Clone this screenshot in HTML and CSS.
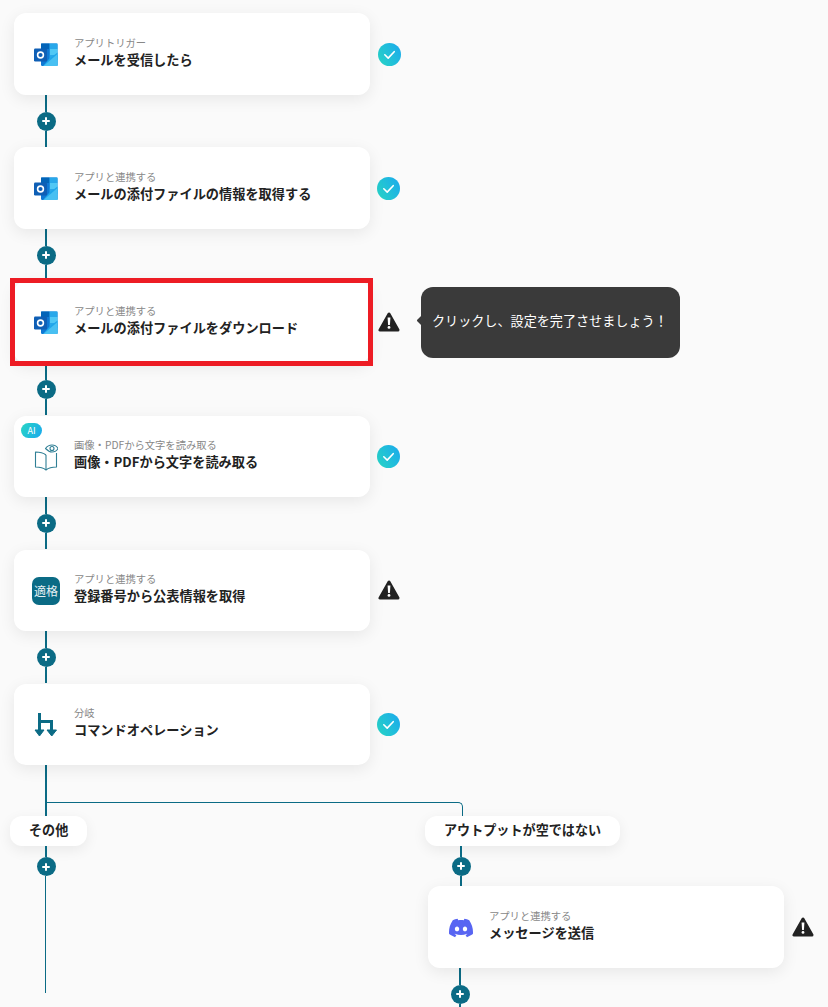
FILE: index.html
```html
<!DOCTYPE html>
<html lang="ja">

<head>
    <meta charset="UTF-8">
    <meta name="viewport" content="width=device-width, initial-scale=1.0">
    <title>フローボット</title>
    <link rel="stylesheet" href="styles.css">
</head>

<body>
    <svg class="defs" width="0" height="0">
        <symbol id="outlook" viewBox="0 0 24 24">
            <rect x="7" y="0.5" width="16.5" height="22.500" rx="1.2" fill="#0f78d4" />
            <path d="M7 .5h8.500V6H7z" fill="#0364b8" />
            <path d="M15.500 .5h8V6h-8z" fill="#28a8ea" />
            <path d="M15.500 6h8v6h-8z" fill="#50c8f5" />
            <path d="M7 6h8.500v6H7z" fill="#0f78d4" />
            <path d="M15.500 12h8v5h-8z" fill="#28a8ea" />
            <path d="M23.500 9.500V22a1 1 0 01-1 1H9l6-7z" fill="#1ea5ea" />
            <path d="M23.500 11v12H9.500z" fill="#48c0f2" />
            <rect x="0" y="5.500" width="13" height="13" rx="1.200" fill="#0f5fb5" />
            <circle cx="6.500" cy="12" r="2.900" fill="none" stroke="#fff" stroke-width="1.600" />
        </symbol>
        <symbol id="check" viewBox="0 0 23 23">
            <path d="M6.800 11.800l3.400 3.300 6-6.400" fill="none" stroke="#fff" stroke-width="1.600" stroke-linecap="round" stroke-linejoin="round" />
        </symbol>
        <symbol id="warn" viewBox="0 0 22 20">
            <path d="M11 2L2 18h18z" fill="#222" stroke="#222" stroke-width="3" stroke-linejoin="round" />
            <path d="M9.600 5.500h2.800l-.5 7.500h-1.800z" fill="#fff" />
            <circle cx="11" cy="15.400" r="1.400" fill="#fff" />
        </symbol>
    </svg>

    <main class="flow">
        <div class="step">
            <div class="card">
                <svg class="icon"><use href="#outlook" /></svg>
                <div class="card-text">
                    <div class="card-sub">アプリトリガー</div>
                    <div class="card-title">メールを受信したら</div>
                </div>
            </div>
            <span class="status status-ok status-far"><svg><use href="#check" /></svg></span>
        </div>
        <div class="connector"><span class="line"></span><span class="plus"></span><span class="line"></span></div>

        <div class="step">
            <div class="card">
                <svg class="icon"><use href="#outlook" /></svg>
                <div class="card-text">
                    <div class="card-sub">アプリと連携する</div>
                    <div class="card-title">メールの添付ファイルの情報を取得する</div>
                </div>
            </div>
            <span class="status status-ok"><svg><use href="#check" /></svg></span>
        </div>
        <div class="connector"><span class="line"></span><span class="plus"></span><span class="line"></span></div>

        <div class="step">
            <div class="card">
                <svg class="icon"><use href="#outlook" /></svg>
                <div class="card-text">
                    <div class="card-sub">アプリと連携する</div>
                    <div class="card-title">メールの添付ファイルをダウンロード</div>
                </div>
            </div>
            <span class="status status-warn"><svg><use href="#warn" /></svg></span>
            <div class="highlight"></div>
            <div class="tooltip">クリックし、設定を完了させましょう！</div>
        </div>
        <div class="connector"><span class="line"></span><span class="plus"></span><span class="line"></span></div>

        <div class="step">
            <div class="card card-low">
                <span class="ai-badge">AI</span>
                <svg class="icon icon-book" viewBox="0 0 24 28">
                    <g fill="none" stroke="#2f7f95" stroke-width="1.100" stroke-linejoin="round">
                        <path d="M12 11C9 8.600 5 8 1.500 8v15c3.500 0 7.500 .5 10.500 3 3-2.500 7-3 10.500-3V9" />
                        <path d="M12 11v15" />
                        <path d="M11.500 4.500C13 2.500 15.500 1 18 1s5 1.500 6 3.500c-1 2-3.500 3.500-6 3.500s-4.500-1.500-6.500-3.500z" />
                        <circle cx="18" cy="4.500" r="2" />
                    </g>
                </svg>
                <div class="card-text">
                    <div class="card-sub">画像・PDFから文字を読み取る</div>
                    <div class="card-title">画像・PDFから文字を読み取る</div>
                </div>
            </div>
            <span class="status status-ok"><svg><use href="#check" /></svg></span>
        </div>
        <div class="connector"><span class="line"></span><span class="plus"></span><span class="line"></span></div>

        <div class="step">
            <div class="card card-low">
                <span class="icon-tile">適格</span>
                <div class="card-text">
                    <div class="card-sub">アプリと連携する</div>
                    <div class="card-title">登録番号から公表情報を取得</div>
                </div>
            </div>
            <span class="status status-warn"><svg><use href="#warn" /></svg></span>
        </div>
        <div class="connector"><span class="line"></span><span class="plus"></span><span class="line"></span></div>

        <div class="step">
            <div class="card card-low">
                <svg class="icon" viewBox="0 0 24 24">
                    <path d="M5.500 0v18M5.500 8.500h12V18" fill="none" stroke="#0b6b85" stroke-width="3" />
                    <path d="M1 17h9l-4.500 6zM13 17h9.500l-4.750 6z" fill="#0b6b85" stroke="#0b6b85" stroke-linejoin="round" />
                </svg>
                <div class="card-text">
                    <div class="card-sub">分岐</div>
                    <div class="card-title">コマンドオペレーション</div>
                </div>
            </div>
            <span class="status status-ok"><svg><use href="#check" /></svg></span>
        </div>

        <div class="trunk">
            <div class="trunk-branch"></div>
        </div>

        <div class="branches">
            <div class="branch branch-left">
                <div class="branch-label">その他</div>
                <div class="connector connector-tail"><span class="line"></span><span class="plus"></span><span class="line-thin"></span></div>
            </div>
            <div class="branch">
                <div class="branch-label">アウトプットが空ではない</div>
                <div class="connector connector-short"><span class="line"></span><span class="plus"></span><span class="line"></span></div>
                <div class="step step-branch">
                    <div class="card">
                        <svg class="icon icon-discord" viewBox="0 0 24 24">
                            <path fill="#5865f2" d="M20.317 4.3698a19.7913 19.7913 0 00-4.8851-1.5152.0741.0741 0 00-.0785.0371c-.211.3753-.4447.8648-.6083 1.2495-1.8447-.2762-3.68-.2762-5.4868 0-.1636-.3933-.4058-.8742-.6177-1.2495a.077.077 0 00-.0785-.037 19.7363 19.7363 0 00-4.8852 1.515.0699.0699 0 00-.0321.0277C.5334 9.0458-.319 13.5799.0992 18.0578a.0824.0824 0 00.0312.0561c2.0528 1.5076 4.0413 2.4228 5.9929 3.0294a.0777.0777 0 00.0842-.0276c.4616-.6304.8731-1.2952 1.226-1.9942a.076.076 0 00-.0416-.1057c-.6528-.2476-1.2743-.5495-1.8722-.8923a.077.077 0 01-.0076-.1277c.1258-.0943.2517-.1923.3718-.2914a.0743.0743 0 01.0776-.0105c3.9278 1.7933 8.18 1.7933 12.0614 0a.0739.0739 0 01.0785.0095c.1202.099.246.1981.3728.2924a.077.077 0 01-.0066.1276 12.2986 12.2986 0 01-1.873.8914.0766.0766 0 00-.0407.1067c.3604.698.7719 1.3628 1.225 1.9932a.076.076 0 00.0842.0286c1.961-.6067 3.9495-1.5219 6.0023-3.0294a.077.077 0 00.0313-.0552c.5004-5.177-.8382-9.6739-3.5485-13.6604a.061.061 0 00-.0312-.0286zM8.02 15.3312c-1.1825 0-2.1569-1.0857-2.1569-2.419 0-1.3332.9555-2.4189 2.157-2.4189 1.2108 0 2.1757 1.0952 2.1568 2.419 0 1.3332-.9555 2.4189-2.1569 2.4189zm7.9748 0c-1.1825 0-2.1569-1.0857-2.1569-2.419 0-1.3332.9554-2.4189 2.1569-2.4189 1.2108 0 2.1757 1.0952 2.1568 2.419 0 1.3332-.946 2.4189-2.1568 2.4189Z" />
                        </svg>
                        <div class="card-text">
                            <div class="card-sub">アプリと連携する</div>
                            <div class="card-title">メッセージを送信</div>
                        </div>
                    </div>
                    <span class="status status-warn"><svg><use href="#warn" /></svg></span>
                </div>
                <div class="connector connector-last"><span class="line"></span><span class="plus"></span><span class="line"></span></div>
            </div>
        </div>
    </main>
</body>

</html>
```

FILE: styles.css
```css
html,
body {
    height: 100%;
}

body {
    margin: 0;
    overflow: hidden;
    background-color: #fafafa;
    color: #222;
    font-family: "Noto Sans CJK JP", "Noto Sans", sans-serif;
}

.defs {
    position: absolute;
}

.flow {
    padding: 13px 0 0 14px;
}

.step {
    position: relative;
    display: flex;
    align-items: center;
}

.card {
    position: relative;
    box-sizing: border-box;
    width: 356px;
    height: 82px;
    padding-left: 18px;
    display: flex;
    align-items: center;
    background-color: white;
    border-radius: 12px;
    box-shadow: 0 4px 16px rgba(0, 0, 0, 0.08);
}

.card-low {
    height: 81px;
    margin-top: 1px;
}

.icon {
    flex: none;
    width: 24px;
    height: 24px;
    margin: 1px 16px 0 2px;
}

.icon-book {
    height: 28px;
    margin-top: 3px;
}

.icon-discord {
    margin-left: 3px;
}

.icon-tile {
    flex: none;
    width: 28px;
    height: 28px;
    margin-right: 14px;
    display: flex;
    justify-content: center;
    align-items: center;
    background-color: #0b6b85;
    border-radius: 7px;
    color: #e6f1f4;
    font-size: 12px;
}

.card-text {
    padding-bottom: 4px;
}

.card-sub {
    height: 15px;
    line-height: 15px;
    color: #888;
    font-size: 10.3px;
}

.card-title {
    height: 20px;
    line-height: 20px;
    font-size: 13.2px;
    font-weight: 700;
}

.ai-badge {
    position: absolute;
    top: 7px;
    left: 7px;
    width: 21px;
    height: 15px;
    line-height: 15px;
    text-align: center;
    background: linear-gradient(120deg, #28d6c4, #1aa8ee);
    border-radius: 8px;
    color: white;
    font-size: 9px;
}

.status {
    width: 23px;
    height: 23px;
    margin-left: 7px;
    display: flex;
    justify-content: center;
    align-items: center;
}

.status-far {
    margin-left: 8px;
}

.status svg {
    width: 23px;
    height: 23px;
}

.status-ok {
    background: linear-gradient(60deg, #28d6c4, #1aa8ee);
    border-radius: 50%;
}

.status-warn svg {
    width: 22px;
    height: 20px;
}

.highlight {
    position: absolute;
    top: -3px;
    left: -4px;
    width: 353px;
    height: 78px;
    border: 5px solid #ed1c24;
}

.tooltip {
    position: absolute;
    top: 6px;
    left: 407px;
    box-sizing: border-box;
    width: 259px;
    height: 71px;
    padding: 0 0 4px 11px;
    display: flex;
    align-items: center;
    background-color: #3a3a3a;
    border-radius: 12px;
    color: white;
    font-size: 13.1px;
}

.tooltip::before {
    content: "";
    position: absolute;
    top: 30px;
    left: -3px;
    width: 7px;
    height: 7px;
    background-color: #3a3a3a;
    border-radius: 1px;
    transform: rotate(45deg);
}

.connector {
    width: 20px;
    height: 52px;
    margin-left: 22px;
    display: flex;
    flex-direction: column;
    align-items: center;
}

.line {
    flex: 1;
    width: 2px;
    background-color: #0b6b85;
}

.line-thin {
    flex: 1;
    width: 1px;
    margin-right: 1px;
    background-color: #0b6b85;
}

.plus {
    position: relative;
    flex: none;
    width: 19px;
    height: 19px;
    background-color: #0b6b85;
    border-radius: 50%;
}

.plus::before,
.plus::after {
    content: "";
    position: absolute;
    background-color: white;
    border-radius: 1px;
}

.plus::before {
    top: 8.5px;
    left: 5.5px;
    width: 8px;
    height: 2px;
}

.plus::after {
    top: 5.5px;
    left: 8.5px;
    width: 2px;
    height: 8px;
}

.trunk {
    box-sizing: border-box;
    width: 2px;
    height: 51px;
    margin-left: 31px;
    background-color: #0b6b85;
}

.trunk-branch {
    box-sizing: border-box;
    width: 416px;
    height: 14px;
    margin-left: 2px;
    position: relative;
    top: 37px;
    border-top: 1px solid #0b6b85;
    border-right: 1px solid #0b6b85;
    border-top-right-radius: 5px;
}

.branches {
    display: flex;
    margin-left: -4px;
}

.branch-left {
    width: 415px;
    flex: none;
}

.branch-label {
    box-sizing: border-box;
    width: fit-content;
    height: 30px;
    padding: 0 19px 3px;
    display: flex;
    align-items: center;
    background-color: white;
    border-radius: 12px;
    box-shadow: 0 4px 14px rgba(0, 0, 0, 0.07);
    font-size: 13.1px;
    font-weight: 700;
}

.branch .connector {
    margin-left: 26px;
}

.branch .connector-last {
    margin-left: 25px;
}

.connector-tail {
    height: 147px;
}

.connector-tail .line {
    flex: none;
    height: 11px;
}

.connector-short {
    height: 40px;
}

.step-branch {
    margin-left: 3px;
}
```
